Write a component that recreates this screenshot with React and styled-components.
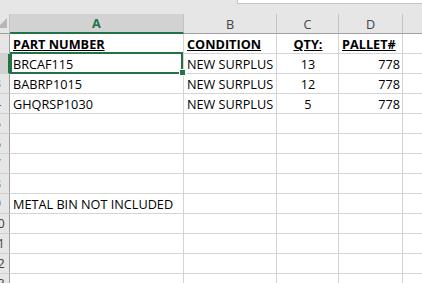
import React from 'react';
import styled, { createGlobalStyle } from 'styled-components';

const GlobalStyle = createGlobalStyle`
    html, body {
        margin: 0;
        padding: 0;
        background: #e6e6e6;
        overflow: hidden;
    }
    body {
        font-family: "Open Sans", "Liberation Sans", sans-serif;
    }
`

const EXCEL_GREEN = '#217346';

const columns = [
    { key: 'A', width: 174, align: 'left' },
    { key: 'B', width: 93, align: 'left' },
    { key: 'C', width: 62, align: 'center' },
    { key: 'D', width: 64, align: 'right' },
    { key: 'E', width: 64, align: 'left' },
];

const headerRow = ['PART NUMBER', 'CONDITION', 'QTY:', 'PALLET#'];
const headerAlign = ['left', 'left', 'center', 'left'];

const dataRows = [
    ['BRCAF115', 'NEW SURPLUS', '13', '778'],
    ['BABRP1015', 'NEW SURPLUS', '12', '778'],
    ['GHQRSP1030', 'NEW SURPLUS', '5', '778'],
    [],
    [],
    [],
    [],
    ['METAL BIN NOT INCLUDED'],
    [],
    [],
    [],
    [],
];

function App() {
    return (
        <Window>
            <GlobalStyle />
            <TopBar>
                <FormulaBox />
            </TopBar>
            <Grid>
                <Corner>
                    <svg width="10" height="10" viewBox="0 0 10 10">
                        <polygon points="10,0 10,10 0,10" fill="#b7b7b7" />
                    </svg>
                </Corner>
                {columns.map((col) => (
                    <ColHeader key={col.key} $selected={col.key === 'A'}>
                        {col.key}
                    </ColHeader>
                ))}

                <RowHeader>1</RowHeader>
                {columns.map((col, i) => (
                    <Cell key={col.key} $align={headerAlign[i] || 'left'} $title>
                        {headerRow[i] ? <span>{headerRow[i]}</span> : null}
                    </Cell>
                ))}

                {dataRows.map((row, r) => {
                    const rowNum = r + 2;
                    return (
                        <React.Fragment key={rowNum}>
                            <RowHeader $selected={rowNum === 2}>{rowNum}</RowHeader>
                            {columns.map((col, i) => (
                                <Cell
                                    key={col.key}
                                    $align={col.align}
                                    $active={rowNum === 2 && col.key === 'A'}
                                >
                                    {row[i]}
                                    {rowNum === 2 && col.key === 'A' && <FillHandle />}
                                </Cell>
                            ))}
                        </React.Fragment>
                    );
                })}
            </Grid>
        </Window>
    )
}

export default App


const Window = styled.div`
    width: 422px;
    height: 283px;
    overflow: hidden;
    background: #e6e6e6;
`
const TopBar = styled.div`
    height: 14px;
    display: flex;
    align-items: flex-start;
`
const FormulaBox = styled.div`
    margin-left: 237px;
    flex: 1;
    height: 3px;
    background: #ffffff;
    border-left: 1px solid #c6c6c6;
    border-bottom: 1px solid #c6c6c6;
`
const Grid = styled.div`
    display: grid;
    grid-template-columns: 24px ${columns.map((c) => `${c.width}px`).join(' ')};
    grid-auto-rows: 20px;
    margin-left: -14px;
    width: max-content;
    background: #ffffff;
`
const HeaderBase = styled.div`
    box-sizing: border-box;
    display: flex;
    align-items: center;
    justify-content: center;
    font-size: 12.7px;
    line-height: 15px;
    color: #444444;
    background: #e6e6e6;
`
const Corner = styled(HeaderBase)`
    justify-content: flex-end;
    align-items: flex-end;
    padding: 0 2px 5px 0;
    border-right: 1px solid #c3c3c3;
    border-bottom: 1px solid #9f9f9f;

    svg {
        display: block;
    }
`
const ColHeader = styled(HeaderBase)`
    padding-top: 1px;
    border-right: 1px solid #c3c3c3;
    border-bottom: ${(p) => (p.$selected ? `2px solid ${EXCEL_GREEN}` : '1px solid #9f9f9f')};
    background: ${(p) => (p.$selected ? '#d2d2d2' : '#e6e6e6')};
    color: ${(p) => (p.$selected ? EXCEL_GREEN : '#444444')};
    font-weight: ${(p) => (p.$selected ? 700 : 400)};
`
const RowHeader = styled(HeaderBase)`
    border-right: ${(p) => (p.$selected ? `2px solid ${EXCEL_GREEN}` : '1px solid #9f9f9f')};
    border-bottom: 1px solid #d0d0d0;
    background: ${(p) => (p.$selected ? '#d2d2d2' : '#e6e6e6')};
    color: ${(p) => (p.$selected ? EXCEL_GREEN : '#444444')};
`
const Cell = styled.div`
    position: relative;
    box-sizing: border-box;
    display: flex;
    align-items: flex-end;
    justify-content: ${(p) =>
        p.$align === 'center' ? 'center' : p.$align === 'right' ? 'flex-end' : 'flex-start'};
    padding: 0 2px 1px 3px;
    border-right: 1px solid #d4d4d4;
    border-bottom: 1px solid #d4d4d4;
    font-size: 12.7px;
    line-height: 15px;
    color: #000000;
    white-space: nowrap;
    font-weight: ${(p) => (p.$title ? 700 : 400)};

    span {
        text-decoration: underline;
        text-underline-offset: 1px;
    }

    ${(p) =>
        p.$active &&
        `
        &::after {
            content: '';
            position: absolute;
            top: -2px;
            left: 0;
            right: 0;
            bottom: -1px;
            border: 2px solid ${EXCEL_GREEN};
            z-index: 1;
        }
    `}
`
const FillHandle = styled.div`
    position: absolute;
    right: -3px;
    bottom: -3px;
    width: 5px;
    height: 5px;
    background: ${EXCEL_GREEN};
    border: 1px solid #ffffff;
    z-index: 2;
`
